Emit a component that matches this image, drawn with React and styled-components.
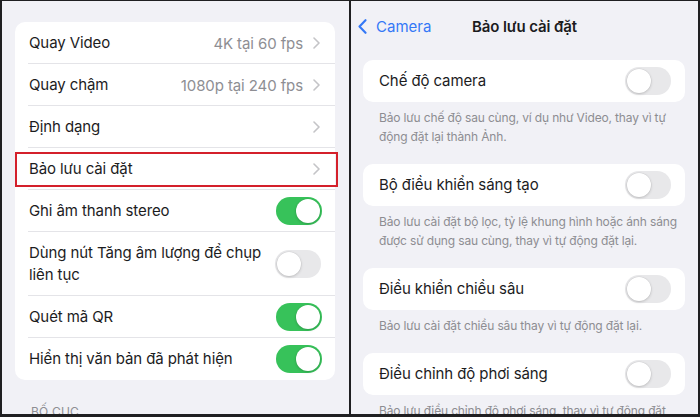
import React from "react";
import styled, { createGlobalStyle } from "styled-components";

const Global = createGlobalStyle`
  html, body { margin: 0; padding: 0; background: #1f1f21; }
  body { font-family: Inter, "Noto Sans", "Liberation Sans", sans-serif; -webkit-font-smoothing: antialiased; }
  * { box-sizing: border-box; }
`;

const Frame = styled.div`
  width: 700px;
  height: 417px;
  display: flex;
  gap: 2px;
  padding: 1px 2px 3px 2px;
  background: #1f1f21;
  overflow: hidden;
`;

const Panel = styled.div`
  width: 347px;
  flex: none;
  background: #f1f1f6;
  overflow: hidden;
  display: flex;
  flex-direction: column;
  padding: ${(p) => p.$pad};
`;

const Card = styled.div`
  background: #ffffff;
  border-radius: 10px;
  display: flex;
  flex-direction: column;
`;

const Row = styled.div`
  position: relative;
  display: flex;
  align-items: center;
  height: ${(p) => p.$h || 42}px;
  padding: 0 ${(p) => p.$pr || 14}px 0 ${(p) => p.$pl || 14}px;
  gap: 10px;
  &:not(:last-child)::after {
    content: "";
    position: absolute;
    left: 13px;
    right: 0;
    bottom: 0;
    height: 1px;
    background: #e4e4e8;
  }
`;

const Label = styled.div`
  flex: 1;
  font-size: 15px;
  line-height: 22px;
  color: #1c1c1e;
  letter-spacing: -0.1px;
  max-width: ${(p) => p.$max || "none"};
`;

const Value = styled.div`
  font-size: 15px;
  color: #8e8e93;
  letter-spacing: -0.1px;
  white-space: nowrap;
`;

const Track = styled.div`
  position: relative;
  width: 46px;
  height: 28px;
  flex: none;
  border-radius: 14px;
  background: ${(p) => (p.$on ? "#37c25a" : "#e8e8ea")};
`;

const Knob = styled.div`
  position: absolute;
  top: 2px;
  left: ${(p) => (p.$on ? "20px" : "2px")};
  width: 24px;
  height: 24px;
  border-radius: 50%;
  background: #ffffff;
  box-shadow: 0 1px 3px rgba(0, 0, 0, 0.18), 0 0 0 0.5px rgba(0, 0, 0, 0.06);
`;

const Highlight = styled.div`
  position: absolute;
  top: 4px;
  bottom: 3px;
  left: 0;
  right: -3px;
  border: 2px solid #d4202b;
  pointer-events: none;
`;

const SectionHead = styled.div`
  margin: 25px 0 0 16px;
  font-size: 12px;
  line-height: 14px;
  color: #8e8e93;
  letter-spacing: 0.2px;
`;

const Nav = styled.div`
  position: relative;
  height: 50px;
  flex: none;
  display: flex;
  align-items: center;
  justify-content: center;
`;

const Back = styled.div`
  position: absolute;
  left: 7px;
  top: 0;
  bottom: 0;
  display: flex;
  align-items: center;
  gap: 9px;
  font-size: 15px;
  color: #3478f6;
`;

const Title = styled.div`
  font-size: 15px;
  font-weight: 600;
  color: #1c1c1e;
  letter-spacing: -0.1px;
`;

const Content = styled.div`
  padding: 9px 13px 0 12px;
  display: flex;
  flex-direction: column;
`;

const Group = styled.div`
  display: flex;
  flex-direction: column;
  margin-bottom: 18.5px;
`;

const Footer = styled.div`
  padding: 5.5px 8px 0 16px;
  font-size: 12px;
  line-height: 19px;
  color: #8d8d92;
  letter-spacing: -0.15px;
`;

const Chevron = () => (
  <svg width="7" height="12" viewBox="0 0 7 12" style={{ flex: "none" }}>
    <polyline points="1,1 6,6 1,11" fill="none" stroke="#c4c4c7" strokeWidth="1.6" strokeLinecap="round" strokeLinejoin="round" />
  </svg>
);

const BackChevron = () => (
  <svg width="9" height="15" viewBox="0 0 9 15">
    <polyline points="7.5,1.2 1.5,7.5 7.5,13.8" fill="none" stroke="#3478f6" strokeWidth="2.1" strokeLinecap="round" strokeLinejoin="round" />
  </svg>
);

const Toggle = ({ on }) => (
  <Track $on={on}>
    <Knob $on={on} />
  </Track>
);

const leftRows = [
  { label: "Quay Video", value: "4K tại 60 fps", chevron: true },
  { label: "Quay chậm", value: "1080p tại 240 fps", chevron: true },
  { label: "Định dạng", chevron: true },
  { label: "Bảo lưu cài đặt", chevron: true, highlight: true },
  { label: "Ghi âm thanh stereo", toggle: true, on: true },
  { label: "Dùng nút Tăng âm lượng để chụp liên tục", toggle: true, on: false, h: 64, max: "236px" },
  { label: "Quét mã QR", toggle: true, on: true },
  { label: "Hiển thị văn bản đã phát hiện", toggle: true, on: true },
];

const rightGroups = [
  { label: "Chế độ camera", note: "Bảo lưu chế độ sau cùng, ví dụ như Video, thay vì tự động đặt lại thành Ảnh." },
  { label: "Bộ điều khiển sáng tạo", note: "Bảo lưu cài đặt bộ lọc, tỷ lệ khung hình hoặc ánh sáng được sử dụng sau cùng, thay vì tự động đặt lại." },
  { label: "Điều khiển chiều sâu", note: "Bảo lưu cài đặt chiều sâu thay vì tự động đặt lại." },
  { label: "Điều chỉnh độ phơi sáng", note: "Bảo lưu điều chỉnh độ phơi sáng, thay vì tự động đặt lại." },
];

export default function App() {
  return (
    <>
      <Global />
      <Frame>
        <Panel $pad="21px 14px 0 13px">
          <Card>
            {leftRows.map((r) => (
              <Row key={r.label} $h={r.h} $pr={r.toggle ? 13 : 15}>
                <Label $max={r.max}>{r.label}</Label>
                {r.value && <Value>{r.value}</Value>}
                {r.chevron && <Chevron />}
                {r.toggle && <Toggle on={r.on} />}
                {r.highlight && <Highlight />}
              </Row>
            ))}
          </Card>
          <SectionHead>BỐ CỤC</SectionHead>
        </Panel>
        <Panel $pad="0">
          <Nav>
            <Back>
              <BackChevron />
              <span>Camera</span>
            </Back>
            <Title>Bảo lưu cài đặt</Title>
          </Nav>
          <Content>
            {rightGroups.map((g) => (
              <Group key={g.label}>
                <Card>
                  <Row $pl={16} $pr={14}>
                    <Label>{g.label}</Label>
                    <Toggle on={false} />
                  </Row>
                </Card>
                <Footer>{g.note}</Footer>
              </Group>
            ))}
          </Content>
        </Panel>
      </Frame>
    </>
  );
}
